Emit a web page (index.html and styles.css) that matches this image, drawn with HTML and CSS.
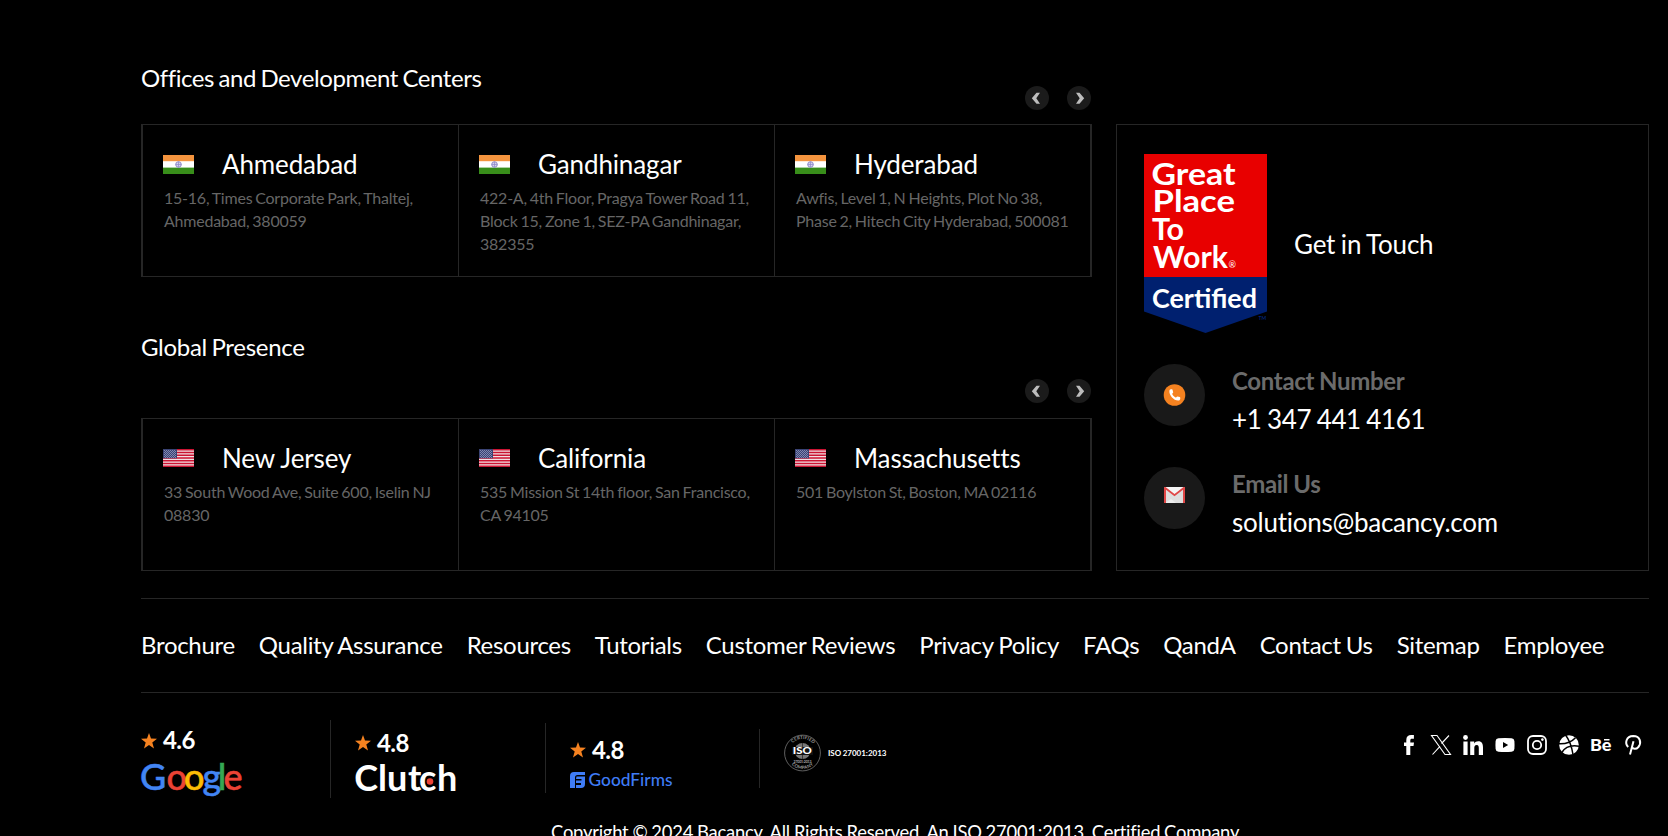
FILE: index.html
```html
<!DOCTYPE html>
<html lang="en">
<head>
<meta charset="utf-8">
<title>Bacancy</title>
<link rel="stylesheet" href="styles.css">
</head>
<body>
<svg class="defs" width="0" height="0">
  <defs>
    <pattern id="stars" width="2" height="2" patternUnits="userSpaceOnUse"><rect width="1" height="1" fill="#7f88b0"/><rect x="1" y="1" width="1" height="1" fill="#7f88b0"/></pattern>
    <symbol id="flag-in" viewBox="0 0 31 19">
      <rect width="31" height="19" fill="#fff"/><rect width="31" height="6.2" fill="#f4943e"/><rect y="12.6" width="31" height="6.4" fill="#388e1a"/>
      <circle cx="15.5" cy="9.5" r="2.8" fill="#d5d3ec" stroke="#8d87c8" stroke-width="1"/><path d="M12.7 9.5h5.6M15.5 6.7v5.6" stroke="#8d87c8" stroke-width=".7"/>
    </symbol>
    <symbol id="flag-us" viewBox="0 0 31 18">
      <rect width="31" height="18" fill="#f1dfe3"/>
      <path d="M0 .7h31M0 3.5h31M0 6.2h31M0 9h31M0 11.8h31M0 14.5h31M0 17.3h31" stroke="#cb1433" stroke-width="1.4"/>
      <rect width="14" height="9.3" fill="#3a4374"/><rect x="1" y="1" width="12" height="8" fill="url(#stars)"/>
    </symbol>
    <symbol id="star" viewBox="0 0 16 16"><path d="M8 0l2 5.6 6 .2-4.7 3.7L13 15.5 8 12.100 3 15.500l1.700-6L0 5.800l6-.2z" fill="#f58220"/></symbol>
    <symbol id="prev" viewBox="0 0 24 24"><circle cx="12" cy="12" r="12" fill="#1b1b1b"/><path d="M11.500 6.800H15l-3.700 5.500 3.700 5.500h-3.500L6.800 12.300z" fill="#bdbdbd"/></symbol>
    <symbol id="next" viewBox="0 0 24 24"><circle cx="12" cy="12" r="12" fill="#1b1b1b"/><path d="M12.500 6.800H9l3.700 5.500L9 17.800h3.500l4.700-5.500z" fill="#bdbdbd"/></symbol>
  </defs>
</svg>
<footer class="footer">
  <div class="top">
    <div class="places">
      <section class="group">
        <h2 class="heading">Offices and Development Centers</h2>
        <div class="arrows"><svg><use href="#prev"/></svg><svg><use href="#next"/></svg></div>
        <div class="cards">
          <article class="card"><div class="city"><svg class="flag"><use href="#flag-in"/></svg><h3>Ahmedabad</h3></div><p>15-16, Times Corporate Park, Thaltej,<br>Ahmedabad, 380059</p></article>
          <article class="card"><div class="city"><svg class="flag"><use href="#flag-in"/></svg><h3>Gandhinagar</h3></div><p>422-A, 4th Floor, Pragya Tower Road 11,<br>Block 15, Zone 1, SEZ-PA Gandhinagar,<br>382355</p></article>
          <article class="card"><div class="city"><svg class="flag"><use href="#flag-in"/></svg><h3>Hyderabad</h3></div><p>Awfis, Level 1, N Heights, Plot No 38,<br>Phase 2, Hitech City Hyderabad, 500081</p></article>
        </div>
      </section>
      <section class="group global">
        <h2 class="heading">Global Presence</h2>
        <div class="arrows"><svg><use href="#prev"/></svg><svg><use href="#next"/></svg></div>
        <div class="cards">
          <article class="card"><div class="city"><svg class="flag us"><use href="#flag-us"/></svg><h3>New Jersey</h3></div><p>33 South Wood Ave, Suite 600, Iselin NJ<br>08830</p></article>
          <article class="card"><div class="city"><svg class="flag us"><use href="#flag-us"/></svg><h3>California</h3></div><p>535 Mission St 14th floor, San Francisco,<br>CA 94105</p></article>
          <article class="card"><div class="city"><svg class="flag us"><use href="#flag-us"/></svg><h3>Massachusetts</h3></div><p>501 Boylston St, Boston, MA 02116</p></article>
        </div>
      </section>
    </div>
    <aside class="contact">
      <div class="touch">
        <svg class="badge" viewBox="0 0 123 179">
          <path d="M0 123h123v34.500L61.500 179 0 157.500z" fill="#00206f"/><path d="M0 0h123v123H0z" fill="#e80000"/>
          <g class="badge-text">
            <text x="7.500" y="31" textLength="84" lengthAdjust="spacingAndGlyphs">Great</text><text x="8.500" y="58" textLength="82.500" lengthAdjust="spacingAndGlyphs">Place</text>
            <text x="8" y="86" textLength="32" lengthAdjust="spacingAndGlyphs">To</text><text x="9" y="113.500" textLength="75" lengthAdjust="spacingAndGlyphs">Work</text>
            <text class="certified" x="8" y="154" textLength="105" lengthAdjust="spacingAndGlyphs">Certified</text>
          </g>
          <text class="reg" x="84.500" y="113.500">®</text><text class="tm" x="114.500" y="166">TM</text>
        </svg>
        <span>Get in Touch</span>
      </div>
      <div class="line">
        <svg class="bubble" viewBox="0 0 61 62"><ellipse cx="30.500" cy="31" rx="30.500" ry="31" fill="#191919"/><circle cx="30.500" cy="31" r="10.800" fill="#f58220"/><path d="M25.500 26.200c.5-1 2.700-1.200 3-.4l.7 2.400c.1.700-1.300 1.300-1 1.900.6 1.400 1.900 2.700 3.400 3.400.6.300 1.100-1.200 1.900-1l2.300.6c.8.300.6 2.600-.3 3.200-4.200 1.600-11.200-4.800-10-10.100z" fill="#fff"/></svg>
        <div><h4>Contact Number</h4><p class="phone">+1 347 441 4161</p></div>
      </div>
      <div class="line">
        <svg class="bubble" viewBox="0 0 61 62"><ellipse cx="30.500" cy="31" rx="30.500" ry="31" fill="#191919"/><path d="M20 20h21v16H20z" fill="#dedede"/><path d="M21 20h19l-9.500 8z" fill="#f5f5f5"/><path d="M21 36l6-4 5 4z" fill="#ededed"/><path d="M20 20h1.500l9 6.900 9-6.900H41v16h-2V22.800l-8.500 6.500-8.500-6.500V36h-2z" fill="#e04848"/></svg>
        <div><h4>Email Us</h4><p class="email">solutions@bacancy.com</p></div>
      </div>
    </aside>
  </div>
  <nav class="links"><a>Brochure</a><a>Quality Assurance</a><a>Resources</a><a>Tutorials</a><a>Customer Reviews</a><a>Privacy Policy</a><a>FAQs</a><a>QandA</a><a>Contact Us</a><a>Sitemap</a><a>Employee</a></nav>
  <div class="bottom">
    <div class="rating google"><div class="score"><svg><use href="#star"/></svg><b>4.6</b></div>
      <svg class="logo" width="103" height="36" viewBox="0 0 103 36"><text class="google-text" x="-1 25.500 43 61.500 76.700 82.500" y="28.500"><tspan fill="#4285f4" stroke="#4285f4">G</tspan><tspan fill="#ea4335" stroke="#ea4335">o</tspan><tspan fill="#fbbc05" stroke="#fbbc05">o</tspan><tspan fill="#4285f4" stroke="#4285f4">g</tspan><tspan fill="#34a853" stroke="#34a853">l</tspan><tspan fill="#ea4335" stroke="#ea4335">e</tspan></text></svg>
    </div>
    <div class="rating clutch"><div class="score"><svg><use href="#star"/></svg><b>4.8</b></div>
      <svg class="logo" width="103" height="36" viewBox="0 0 103 36"><text class="clutch-text" x="-.8 23 32 53 64 82" y="32">Clutch</text><circle cx="75" cy="22.500" r="3.300" fill="#ef4335"/></svg>
    </div>
    <div class="rating goodfirms"><div class="score"><svg><use href="#star"/></svg><b>4.8</b></div>
      <svg class="logo" width="103" height="20" viewBox="0 0 103 20"><path d="M4 1h11v3H7.500Q5 4 5 6.500V17H0V5Q0 1 4 1z" fill="#3f7cf6"/><path d="M6.500 5.500H15V13q0 4-4 4H6v-3h5v-2H6V9.500h5.500V8H6z" fill="#3f7cf6"/><text class="gf-text" x="18.500" y="15" textLength="84" lengthAdjust="spacingAndGlyphs">GoodFirms</text></svg>
    </div>
    <div class="iso">
      <svg width="37" height="38" viewBox="0 0 37 38"><defs><path id="arc-top" d="M4.500 19a14 14 0 0 1 28 0"/><path id="arc-bottom" d="M2.500 19a16 16 0 0 0 32 0"/></defs><circle cx="18.500" cy="19" r="17.900" fill="none" stroke="#777" stroke-width=".8"/><circle cx="18.500" cy="17" r="8" fill="#777"/><path d="M10 14h17M18.500 9v16M11 20h15" stroke="#111" stroke-width=".6"/><rect x="8" y="13" width="21" height="8" fill="#111"/><text class="iso-text" x="8.800" y="20.300" textLength="19" lengthAdjust="spacingAndGlyphs">ISO</text><text class="iso-num" x="9.500" y="28.500" textLength="18">27001:2013</text><text class="ring"><textPath href="#arc-top" startOffset="11" textLength="23">CERTIFIED</textPath></text><text class="ring"><textPath href="#arc-bottom" startOffset="13" textLength="24">COMPANY</textPath></text></svg>
      <b>ISO 27001:2013</b>
    </div>
    <div class="social">
      <svg viewBox="0 0 20 20"><path d="M7.300 20v-9H5V7.500h2.300V5c0-3.300 1.800-5 5-5h2.600v3.700h-1.800c-1.400 0-1.800.6-1.800 1.700v2.100H15l-.5 3.500h-3.200v9z"/></svg>
      <svg viewBox="0 0 20 20"><path d="M.5.500H6L19.500 19.500H14zM18 .5l-7.500 8M1.500 19.500L9 11.300" fill="none" stroke="#fff" stroke-width="1.100"/></svg>
      <svg viewBox="0 0 20 20"><circle cx="2.500" cy="2.500" r="2.400"/><path d="M.4 6.600h4.200V20H.4zM7.200 6.600h4v1.900c.8-1.400 2.200-2.200 4-2.200 3.800 0 4.800 2.600 4.800 6.200V20h-4.200v-6.700c0-1.700-.2-3.400-2.100-3.400-2 0-2.400 1.500-2.400 3.200V20H7.200z"/></svg>
      <svg viewBox="0 0 20 20"><path fill-rule="evenodd" d="M3.500 3.200Q10 2.600 16.500 3.200 19.200 3.400 19.400 6 19.700 10 19.400 14 19.200 16.500 16.500 16.800 10 17.300 3.500 16.800.8 16.500.6 14 .3 10 .6 6 .8 3.400 3.500 3.200zM8 7v6l5.200-3z"/></svg>
      <svg viewBox="0 0 20 20"><g fill="none" stroke="#fff" stroke-width="1.800"><rect x="1" y="1" width="18" height="18" rx="5"/><circle cx="10" cy="10" r="4.200"/></g><circle cx="15.400" cy="4.600" r="1.300"/></svg>
      <svg viewBox="0 0 20 20"><circle cx="10" cy="10" r="9.800"/><path d="M6.500 0q5.500 7 7.500 19.500M0 8.700q10.500.5 16.500-6M2.800 17.500Q8 9 20 11.200" fill="none" stroke="#000" stroke-width="1.500"/></svg>
      <svg viewBox="0 0 20 20"><text class="be" x="-1" y="15.500" textLength="21.500" lengthAdjust="spacingAndGlyphs">Be</text><path d="M13 4h5.500v1.500h-5.500z"/></svg>
      <svg viewBox="0 0 20 20"><path d="M5.200 12C1.500 8.500 3 1.200 10.200 1c7.600 0 8.200 7.300 5.200 11-2.300 2.700-5.500 2.200-6.300.2M10.500 6.200L7 19.500" fill="none" stroke="#fff" stroke-width="2"/></svg>
    </div>
  </div>
  <p class="copyright">Copyright © 2024 Bacancy. All Rights Reserved. An ISO 27001:2013, Certified Company</p>
</footer>
</body>
</html>
```

FILE: styles.css
```css
* { box-sizing: border-box; margin: 0; padding: 0; }
body { background: #000; color: #fff; font-family: Lato, sans-serif; overflow: hidden; height: 836px; }
.defs { display: block; }
.footer { width: 1508px; margin-left: 141px; padding-top: 64px; }
.top { display: flex; align-items: flex-end; justify-content: space-between; height: 507px; }
.places { width: 951px; }
.heading { font-size: 24px; font-weight: 400; line-height: 27px; height: 22px; letter-spacing: -.42px; word-spacing: -1.300px; }
.arrows { display: flex; gap: 18px; justify-content: flex-end; padding-right: 1px; height: 38px; }
.arrows svg { width: 24px; height: 24px; }
.global { margin-top: 56px; }
.global .heading { height: 46px; letter-spacing: -.3px; }
.global .arrows { height: 39px; }
.cards { display: grid; grid-template-columns: 317px 316px 316px; height: 153px; border: 1px solid #262626; }
.card { border-right: 1px solid #262626; padding: 23px 0 0 20px; }
.card:first-child { border-left: 1px solid #262626; }
.city { display: flex; gap: 28px; padding-top: 1px; }
.flag { width: 31px; height: 19px; margin-top: 6px; }
.flag.us { height: 18px; }
.city h3 { font-size: 26px; font-weight: 400; line-height: 31px; letter-spacing: -.13px; }
.card p { font-size: 16px; line-height: 23px; color: #666; margin-top: 6px; padding-left: 1px; white-space: nowrap; letter-spacing: -.23px; word-spacing: -1px; }
.contact { width: 533px; height: 447px; border: 1px solid #262626; padding: 29px 27px; }
.touch { display: flex; align-items: center; gap: 27px; height: 179px; margin-bottom: 31px; font-size: 26px; letter-spacing: -.2px; word-spacing: -.8px; }
.touch span { padding-top: 1px; }
.badge { width: 123px; height: 179px; letter-spacing: 0; }
.badge-text { font: 700 30.500px Lato, sans-serif; fill: #fff; }
.badge-text .certified { font-size: 27px; }
.reg { font: 9px Lato, sans-serif; fill: #fff; }
.tm { font: 5px Lato, sans-serif; fill: #00309f; }
.line { display: flex; gap: 27px; height: 103px; }
.bubble { width: 61px; height: 62px; }
.line h4 { font-size: 24px; font-weight: 700; line-height: 29px; color: #6b6b6b; padding-top: 2px; letter-spacing: -.33px; word-spacing: -.5px; }
.line p { font-size: 26px; line-height: 31px; margin-top: 9px; }
.phone { letter-spacing: -.35px; word-spacing: -.8px; }
.email { letter-spacing: -.25px; }
.links { display: flex; gap: 24px; margin-top: 27px; height: 95px; border: solid #262626; border-width: 1px 0; font-size: 24px; line-height: 92px; white-space: nowrap; letter-spacing: -.3px; word-spacing: -.8px; }
.bottom { display: flex; align-items: flex-start; height: 128px; padding-top: 27px; }
.score { display: flex; align-items: center; gap: 6px; font-size: 24px; line-height: 29px; height: 29px; }
.score svg { width: 16px; height: 16px; }
.score b { font-weight: 700; letter-spacing: -.6px; }
.google .score b { margin-top: -2px; }
.logo { display: block; overflow: visible; }
.rating { border-right: 1px solid #262626; }
.google { width: 190px; height: 78px; padding-top: 6px; }
.google .logo { margin-top: 6px; }
.google-text { font: 500 36px Lato, sans-serif; stroke-width: .5px; }
.clutch { width: 215px; height: 70px; margin-top: 3px; padding: 5px 0 0 24px; }
.clutch-text { font: 700 36px Lato, sans-serif; fill: #fff; }
.clutch .logo { margin-top: 2px; }
.goodfirms { width: 214px; height: 59px; margin-top: 9px; padding: 6px 0 0 24px; }
.goodfirms .logo { margin-top: 7px; }
.gf-text { font: 500 18px Lato, sans-serif; fill: #3f7cf6; }
.iso { display: flex; align-items: center; gap: 7px; margin: 14px 0 0 24px; font-size: 8px; word-spacing: -.5px; }
.iso svg, .social svg { overflow: visible; }
.iso-text { font: 900 10px Lato, sans-serif; fill: #fff; }
.iso-num { font: 700 3.500px Lato, sans-serif; fill: #aaa; }
.ring { font: 700 4.500px Lato, sans-serif; fill: #999; }
.social { display: flex; gap: 12px; margin: 15px 6px 0 auto; }
.social svg { width: 20px; height: 20px; fill: #fff; }
.be { font: 900 16px Lato, sans-serif; }
.copyright { font-size: 18.400px; line-height: 22px; padding-left: 410px; white-space: nowrap; letter-spacing: -.22px; word-spacing: -.6px; }
```
